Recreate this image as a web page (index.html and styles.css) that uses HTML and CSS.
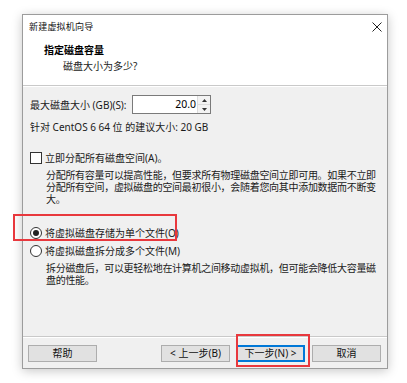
FILE: index.html
```html
<!DOCTYPE html>
<html lang="zh-CN">
<head>
<meta charset="utf-8">
<title>新建虚拟机向导</title>
<link rel="stylesheet" href="styles.css">
</head>
<body>
<div class="dialog">
  <div class="header">
    <div class="titlebar">
      <span class="title">新建虚拟机向导</span>
      <svg class="close" width="10" height="10" viewBox="0 0 10 10"><path d="M0.5 0.5 L9.5 9.5 M9.5 0.5 L0.5 9.5" stroke="#222" stroke-width="1" fill="none"/></svg>
    </div>
    <div class="h-main">指定磁盘容量</div>
    <div class="h-sub">磁盘大小为多少?</div>
  </div>
  <div class="body">
    <div class="size-row">
      <span class="lbl">最大磁盘大小 (GB)(S):</span>
      <div class="spin">
        <div class="spin-input">20.0</div>
        <div class="spin-btns">
          <div class="sb"><svg width="5" height="3" viewBox="0 0 5 3"><path d="M0 3 L2.5 0 L5 3 Z" fill="#333"/></svg></div>
          <div class="sb"><svg width="5" height="3" viewBox="0 0 5 3"><path d="M0 0 L2.5 3 L5 0 Z" fill="#333"/></svg></div>
        </div>
      </div>
    </div>
    <div class="rec">针对 CentOS 6 64 位 的建议大小: 20 GB</div>
    <div class="opt opt-check"><span class="checkbox"></span><span>立即分配所有磁盘空间(A)。</span></div>
    <div class="desc">分配所有容量可以提高性能，但要求所有物理磁盘空间立即可用。如果不立即分配所有空间，虚拟磁盘的空间最初很小，会随着您向其中添加数据而不断变大。</div>
    <div class="opt opt-r1"><span class="radio checked"></span><span>将虚拟磁盘存储为单个文件(O)</span></div>
    <div class="opt opt-r2"><span class="radio"></span><span>将虚拟磁盘拆分成多个文件(M)</span></div>
    <div class="desc">拆分磁盘后，可以更轻松地在计算机之间移动虚拟机，但可能会降低大容量磁盘的性能。</div>
  </div>
  <div class="footer">
    <button class="btn">帮助</button>
    <span class="spacer"></span>
    <button class="btn">&lt; 上一步(B)</button>
    <button class="btn btn-default">下一步(N) &gt;</button>
    <button class="btn btn-cancel">取消</button>
  </div>
</div>
<div class="mark mark-radio"></div>
<div class="mark mark-next"></div>
</body>
</html>
```
FILE: styles.css
```css
html, body {
  margin: 0;
  padding: 0;
  background: #ffffff;
}
body {
  font-family: "Noto Sans", "Noto Sans CJK SC", sans-serif;
  font-size: 10px;
  line-height: 12px;
  color: #1a1a1a;
  position: relative;
  width: 407px;
  height: 383px;
  overflow: hidden;
}
.dialog {
  position: absolute;
  left: 22px;
  top: 14px;
  width: 366px;
  height: 355px;
  box-sizing: border-box;
  border: 1px solid #9c9c9c;
  background: #f0f0f0;
  box-shadow: 0 2px 10px rgba(0,0,0,0.22);
  display: flex;
  flex-direction: column;
}
.header {
  background: #ffffff;
  height: 70px;
  border-bottom: 1px solid #c9c9c9;
  box-shadow: 0 1px 0 #ffffff;
}
.titlebar {
  height: 23px;
  display: flex;
  align-items: center;
  justify-content: space-between;
  padding: 0 4px 0 6px;
}
.title {
  font-size: 9px;
  letter-spacing: 0.2px;
  color: #111;
}
.close {
  margin-right: 1px;
}
.h-main {
  font-weight: bold;
  margin: 6px 0 0 21px;
  color: #000;
}
.h-sub {
  margin: 4px 0 0 40px;
  color: #222;
}
.body {
  flex: 1;
  padding: 9px 7px 0 7px;
  border-bottom: 1px solid #c9c9c9;
}
.size-row {
  display: flex;
  align-items: center;
  height: 19px;
}
.lbl {
  width: 102px;
}
.spin {
  display: flex;
  height: 19px;
  box-sizing: border-box;
  border: 1px solid #7a7a7a;
  background: #fff;
}
.spin-input {
  width: 63px;
  text-align: right;
  padding-right: 1px;
  line-height: 17px;
  font-size: 10.5px;
  color: #000;
}
.spin-btns {
  width: 12px;
  display: flex;
  flex-direction: column;
  border-left: 1px solid #dcdcdc;
}
.sb {
  flex: 1;
  display: flex;
  align-items: center;
  justify-content: center;
  background: #f3f3f3;
}
.sb + .sb {
  border-top: 1px solid #dcdcdc;
}
.rec {
  margin-top: 7px;
}
.opt {
  display: flex;
  align-items: center;
  height: 12px;
}
.opt-check {
  margin-top: 19px;
}
.opt-r1 {
  margin-top: 22px;
}
.opt-r2 {
  margin-top: 6px;
}
.checkbox {
  width: 10px;
  height: 10px;
  border: 1px solid #333;
  background: #fff;
  margin-right: 3px;
  flex: none;
}
.radio {
  width: 10px;
  height: 10px;
  border: 1px solid #333;
  border-radius: 50%;
  background: #fff;
  margin-right: 3px;
  flex: none;
  position: relative;
}
.radio.checked::after {
  content: "";
  position: absolute;
  left: 2px;
  top: 2px;
  width: 6px;
  height: 6px;
  border-radius: 50%;
  background: #222;
}
.desc {
  margin: 5px 0 0 16px;
  letter-spacing: -0.3px;
}
.footer {
  height: 31px;
  box-shadow: inset 0 1px 0 #ffffff;
  display: flex;
  align-items: flex-start;
  padding: 8px 6px 0 5px;
  box-sizing: border-box;
}
.spacer {
  flex: 1;
}
.btn {
  width: 69px;
  height: 17px;
  box-sizing: border-box;
  border: 1px solid #adadad;
  background: #e1e1e1;
  font-family: "Noto Sans", "Noto Sans CJK SC", sans-serif;
  font-size: 10px;
  line-height: 13px;
  color: #111;
  padding: 0;
  margin: 0;
}
.btn-default {
  margin-left: 6px;
  border-color: #0078d7;
  box-shadow: inset 0 0 0 1px #0078d7;
}
.btn-cancel {
  margin-left: 7px;
}
.mark {
  position: absolute;
  border: 2px solid #e8383d;
  box-sizing: border-box;
}
.mark-radio {
  left: 13px;
  top: 214px;
  width: 164px;
  height: 27px;
}
.mark-next {
  left: 236px;
  top: 334px;
  width: 74px;
  height: 33px;
}
```
